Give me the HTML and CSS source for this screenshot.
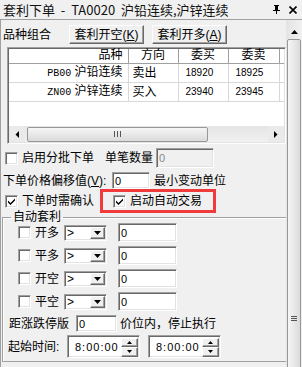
FILE: index.html
```html
<!DOCTYPE html>
<html lang="zh">
<head>
    <meta charset="UTF-8">
    <title>套利下单</title>
    <link rel="stylesheet" href="styles.css">
</head>
<body>
<div class="window">
    <div class="titlebar">
        <span class="title">套利下单  -  TA0020  沪铅连续,沪锌连续</span>
        <span class="pin">
            <svg width="7" height="9" viewBox="0 0 7 9"><path d="M1 0h5v1h-1v4h2v1h-3v3h-1v-3h-3v-1h2v-4h-1z" fill="#000"/></svg>
        </span>
        <span class="close">
            <svg width="8" height="8" viewBox="0 0 8 8"><path d="M0.5 0.5l7 7M7.5 0.5l-7 7" stroke="#000" stroke-width="1.6"/></svg>
        </span>
    </div>
    <div class="client">
        <div class="content">
            <div class="row-combo">
                <span class="combo-label">品种组合</span>
                <button class="btn">套利开空(<u>K</u>)</button>
                <button class="btn">套利开多(<u>A</u>)</button>
            </div>

            <div class="listview">
                <table class="grid">
                    <thead>
                        <tr>
                            <th class="c-name">品种</th>
                            <th class="c-dir">方向</th>
                            <th class="c-num">委买</th>
                            <th class="c-num2">委卖</th>
                            <th class="c-fill"></th>
                        </tr>
                    </thead>
                    <tbody>
                        <tr>
                            <td class="c-name"><span class="code">PB00</span> 沪铅连续</td>
                            <td class="c-dir">卖出</td>
                            <td class="num">18920</td>
                            <td class="num">18925</td>
                            <td class="c-fill"></td>
                        </tr>
                        <tr>
                            <td class="c-name"><span class="code">ZN00</span> 沪锌连续</td>
                            <td class="c-dir">买入</td>
                            <td class="num">23940</td>
                            <td class="num">23945</td>
                            <td class="c-fill"></td>
                        </tr>
                    </tbody>
                </table>
                <div class="hscroll">
                    <span class="arrow-btn">
                        <svg width="4" height="7" viewBox="0 0 4 7"><path d="M4 0v7L0.5 3.5z" fill="#000"/></svg>
                    </span>
                    <span class="htrack">
                        <span class="hthumb">
                            <svg width="7" height="6" viewBox="0 0 7 6"><path d="M0 0h1v6h-1zM3 0h1v6h-1zM6 0h1v6h-1z" fill="#555"/></svg>
                        </span>
                    </span>
                    <span class="arrow-btn">
                        <svg width="4" height="7" viewBox="0 0 4 7"><path d="M0 0v7L3.5 3.5z" fill="#000"/></svg>
                    </span>
                </div>
            </div>

            <div class="row-batch">
                <span class="chk"></span>
                <span class="chk-label">启用分批下单</span>
                <span class="qty-label">单笔数量</span>
                <input class="field qty" type="text" value="0" disabled>
            </div>

            <div class="row-offset">
                <span class="offset-label">下单价格偏移值(<u>V</u>):</span>
                <input class="field offset" type="text" value="0">
                <span class="unit-label">最小变动单位</span>
            </div>

            <div class="row-confirm">
                <span class="chk checked"><svg width="7" height="7" viewBox="0 0 7 7"><path d="M0 2.5l2.5 2.5 4.5-4.5v2l-4.5 4.5-2.5-2.5z" fill="#000"/></svg></span>
                <span class="chk-label confirm-label">下单时需确认</span>
                <span class="highlight">
                    <span class="chk checked"><svg width="7" height="7" viewBox="0 0 7 7"><path d="M0 2.5l2.5 2.5 4.5-4.5v2l-4.5 4.5-2.5-2.5z" fill="#000"/></svg></span>
                    <span class="chk-label">启动自动交易</span>
                </span>
            </div>

            <fieldset class="group">
                <legend>自动套利</legend>

                <div class="auto-row">
                    <span class="chk"></span>
                    <span class="auto-label">开多</span>
                    <span class="combo"><span class="combo-text">&gt;</span><span class="combo-btn"><svg width="7" height="4" viewBox="0 0 7 4"><path d="M0 0h7L3.5 4z" fill="#000"/></svg></span></span>
                    <input class="field auto-val" type="text" value="0">
                </div>
                <div class="auto-row">
                    <span class="chk"></span>
                    <span class="auto-label">平多</span>
                    <span class="combo"><span class="combo-text">&gt;</span><span class="combo-btn"><svg width="7" height="4" viewBox="0 0 7 4"><path d="M0 0h7L3.5 4z" fill="#000"/></svg></span></span>
                    <input class="field auto-val" type="text" value="0">
                </div>
                <div class="auto-row">
                    <span class="chk"></span>
                    <span class="auto-label">开空</span>
                    <span class="combo"><span class="combo-text">&gt;</span><span class="combo-btn"><svg width="7" height="4" viewBox="0 0 7 4"><path d="M0 0h7L3.5 4z" fill="#000"/></svg></span></span>
                    <input class="field auto-val" type="text" value="0">
                </div>
                <div class="auto-row">
                    <span class="chk"></span>
                    <span class="auto-label">平空</span>
                    <span class="combo"><span class="combo-text">&gt;</span><span class="combo-btn"><svg width="7" height="4" viewBox="0 0 7 4"><path d="M0 0h7L3.5 4z" fill="#000"/></svg></span></span>
                    <input class="field auto-val" type="text" value="0">
                </div>

                <div class="limit-row">
                    <span class="limit-label">距涨跌停版</span>
                    <input class="field limit" type="text" value="0">
                    <span class="limit-tail">价位内，停止执行</span>
                </div>

                <div class="time-row">
                    <span class="time-label">起始时间:</span>
                    <span class="spin">
                        <span class="spin-text">8:00:00</span>
                        <span class="spin-btns">
                            <span class="spin-btn"><svg width="5" height="3" viewBox="0 0 5 3"><path d="M0 3h5L2.5 0z" fill="#000"/></svg></span>
                            <span class="spin-btn"><svg width="5" height="3" viewBox="0 0 5 3"><path d="M0 0h5L2.5 3z" fill="#000"/></svg></span>
                        </span>
                    </span>
                    <span class="spin">
                        <span class="spin-text">8:00:00</span>
                        <span class="spin-btns">
                            <span class="spin-btn"><svg width="5" height="3" viewBox="0 0 5 3"><path d="M0 3h5L2.5 0z" fill="#000"/></svg></span>
                            <span class="spin-btn"><svg width="5" height="3" viewBox="0 0 5 3"><path d="M0 0h5L2.5 3z" fill="#000"/></svg></span>
                        </span>
                    </span>
                </div>
            </fieldset>
        </div>

        <div class="vscroll">
            <span class="up-btn">
                <svg width="7" height="4" viewBox="0 0 7 4"><path d="M0 4h7L3.5 0z" fill="#000"/></svg>
            </span>
            <span class="vthumb">
                <svg width="6" height="5" viewBox="0 0 6 5"><path d="M0 0h6v1h-6zM0 2h6v1h-6zM0 4h6v1h-6z" fill="#555"/></svg>
            </span>
        </div>
    </div>
</div>
</body>
</html>
```

FILE: styles.css
```css
* {
    box-sizing: border-box;
}
body {
    margin: 0;
    font-family: "Liberation Sans", "Noto Sans CJK SC", sans-serif;
    font-size: 12px;
    color: #000;
    background: #f0f0f0;
}
.window {
    width: 302px;
    height: 367px;
    overflow: hidden;
    display: flex;
    flex-direction: column;
}

/* title bar */
.titlebar {
    height: 20px;
    flex: none;
    display: flex;
    align-items: center;
    padding-left: 3px;
    border-bottom: 1px solid #a0a0a0;
    background: #f0f0f0;
}
.title {
    font-family: "Noto Sans CJK SC", sans-serif;
    font-size: 13px;
    line-height: 16px;
    white-space: pre;
    color: #111;
}
.pin {
    margin-left: auto;
    display: flex;
}
.close {
    display: flex;
    margin-left: 9px;
    margin-right: 5px;
}

.client {
    flex: 1;
    display: flex;
    min-height: 0;
}
.content {
    width: 286px;
    flex: none;
    border-left: 1px solid #a0a0a0;
    overflow: hidden;
    display: flex;
    flex-direction: column;
}

/* common controls */
.btn {
    font-family: inherit;
    font-size: 12px;
    line-height: 14px;
    height: 19px;
    width: 75px;
    padding: 0;
    margin: 0 8px 0 0;
    background: #f0f0f0;
    border: 1px solid;
    border-color: #fff #696969 #696969 #fff;
    box-shadow: inset -1px -1px #a0a0a0;
    color: #000;
}
.field {
    font-family: "Liberation Sans", sans-serif;
    font-size: 11px;
    padding: 0 0 0 2px;
    margin: 0;
    background: #fff;
    color: #000;
    border: 1px solid;
    border-color: #a0a0a0 #fff #fff #a0a0a0;
    box-shadow: inset 1px 1px #696969, inset -1px -1px #e3e3e3;
    outline: none;
}
.field:disabled {
    background: #f0f0f0;
    color: #8a8a8a;
}
.chk {
    width: 13px;
    height: 13px;
    flex: none;
    display: flex;
    align-items: center;
    justify-content: center;
    background: #fff;
    border: 1px solid;
    border-color: #a0a0a0 #fff #fff #a0a0a0;
    box-shadow: inset 1px 1px #696969, inset -1px -1px #e3e3e3;
}
.chk-label {
    margin-left: 4px;
    line-height: 14px;
}

/* first row */
.row-combo {
    margin-top: 5px;
    height: 19px;
    flex: none;
    display: flex;
    align-items: center;
    padding-left: 2px;
}
.combo-label {
    width: 66px;
    line-height: 14px;
}

/* list */
.listview {
    margin: 3px 0 0 6px;
    width: 279px;
    height: 97px;
    flex: none;
    background: #fff;
    border: 1px solid;
    border-color: #a0a0a0 #fff #fff #a0a0a0;
    box-shadow: inset 1px 1px #696969, inset -1px -1px #e3e3e3;
    padding: 1px;
    display: flex;
    flex-direction: column;
}
.grid {
    border-collapse: collapse;
    table-layout: fixed;
    width: 275px;
}
.grid th {
    height: 14px;
    padding: 0;
    font-weight: normal;
    line-height: 13px;
    background: #fff;
    border-right: 1px solid #a0a0a0;
    border-bottom: 1px solid #a0a0a0;
    text-align: center;
}
.grid td {
    height: 19px;
    padding: 0;
    line-height: 14px;
    border-right: 1px solid #d8d8d8;
    border-bottom: 1px solid #d8d8d8;
}
.grid .c-name {
    width: 119px;
    text-align: right;
    padding-right: 5px;
}
.grid .c-dir {
    width: 50px;
}
.grid td.c-dir {
    padding-left: 4px;
}
.grid .c-num {
    width: 50px;
}
.grid .c-num2 {
    width: 51px;
}
.grid .c-fill {
    border-right: none;
}
.code {
    font-family: "Liberation Mono", monospace;
    font-size: 10px;
}
.grid td.num {
    font-size: 10px;
    padding-left: 7px;
}
.hscroll {
    margin-top: auto;
    height: 16px;
    display: flex;
}
.arrow-btn {
    width: 16px;
    flex: none;
    display: flex;
    align-items: center;
    justify-content: center;
    background: #eaeaea;
}
.htrack {
    flex: 1;
    display: flex;
    align-items: center;
    background: linear-gradient(#e4e4e4, #f1f1f1);
}
.hthumb {
    width: 181px;
    height: 15px;
    margin-left: 2px;
    display: flex;
    align-items: center;
    justify-content: center;
    border: 1px solid #979797;
    border-radius: 2px;
    background: linear-gradient(#f6f6f6, #dadada);
}

/* option rows */
.row-batch {
    margin-top: 4px;
    height: 20px;
    flex: none;
    display: flex;
    align-items: center;
    padding-left: 4px;
}
.qty-label {
    margin-left: 11px;
    line-height: 14px;
}
.field.qty {
    margin-left: 3px;
    width: 58px;
    height: 20px;
}
.row-offset {
    margin-top: 4px;
    height: 17px;
    flex: none;
    display: flex;
    align-items: center;
    padding-left: 2px;
}
.offset-label {
    width: 109px;
    line-height: 14px;
}
.field.offset {
    width: 38px;
    height: 17px;
}
.unit-label {
    margin-left: 4px;
    line-height: 14px;
}
.row-confirm {
    height: 24px;
    flex: none;
    display: flex;
    align-items: center;
    padding-left: 4px;
}
.confirm-label {
    width: 78px;
}
.highlight {
    width: 116px;
    height: 24px;
    display: flex;
    align-items: center;
    padding-left: 10px;
    border: 3px solid #ef3b3b;
}

/* group box */
.group {
    margin: -2px 0 0 1px;
    width: 290px;
    padding: 0 0 3px 0;
    border: 1px solid #a0a0a0;
    box-shadow: inset 1px 1px #fff;
    min-width: 0;
}
.group legend {
    margin-left: 8px;
    padding: 0 2px;
    line-height: 12px;
}
.auto-row {
    height: 19px;
    display: flex;
    align-items: center;
    padding-left: 15px;
    margin-top: 4px;
}
.auto-row:first-of-type {
    margin-top: 0;
}
.auto-label {
    width: 29px;
    margin-left: 4px;
    line-height: 14px;
}
.combo {
    width: 43px;
    height: 16px;
    display: flex;
    align-items: center;
    background: #fff;
    border: 1px solid;
    border-color: #a0a0a0 #fff #fff #a0a0a0;
    box-shadow: inset 1px 1px #696969, inset -1px -1px #e3e3e3;
    padding: 1px 1px 1px 2px;
}
.combo-text {
    font-family: "Liberation Sans", sans-serif;
    font-size: 12px;
    line-height: 12px;
}
.combo-btn {
    margin-left: auto;
    width: 15px;
    height: 12px;
    display: flex;
    align-items: center;
    justify-content: center;
    background: #f0f0f0;
    border: 1px solid;
    border-color: #fff #696969 #696969 #fff;
    box-shadow: inset -1px -1px #a0a0a0;
}
.field.auto-val {
    margin-left: 11px;
    width: 59px;
    height: 19px;
}
.limit-row {
    margin-top: 4px;
    height: 17px;
    display: flex;
    align-items: center;
    padding-left: 6px;
}
.limit-label {
    width: 67px;
    line-height: 14px;
}
.field.limit {
    width: 41px;
    height: 17px;
}
.limit-tail {
    margin-left: 3px;
    line-height: 14px;
}
.time-row {
    margin-top: 3px;
    height: 23px;
    display: flex;
    align-items: center;
    padding-left: 5px;
}
.time-label {
    width: 59px;
    line-height: 14px;
}
.spin {
    width: 73px;
    height: 23px;
    margin-right: 8px;
    display: flex;
    align-items: center;
    background: #fff;
    border: 1px solid;
    border-color: #a0a0a0 #fff #fff #a0a0a0;
    box-shadow: inset 1px 1px #696969, inset -1px -1px #e3e3e3;
    padding: 2px 1px 1px 7px;
}
.spin-text {
    font-size: 11px;
    letter-spacing: 1px;
    line-height: 13px;
}
.spin-btns {
    margin-left: auto;
    width: 17px;
    height: 19px;
    display: flex;
    flex-direction: column;
}
.spin-btn {
    flex: 1;
    display: flex;
    align-items: center;
    justify-content: center;
    background: #f0f0f0;
    border: 1px solid;
    border-color: #fff #696969 #696969 #fff;
    box-shadow: inset -1px -1px #a0a0a0;
}

/* window scrollbar */
.vscroll {
    width: 16px;
    flex: none;
    display: flex;
    flex-direction: column;
    align-items: center;
    background: linear-gradient(to right, #e4e4e4, #f1f1f1);
}
.up-btn {
    height: 18px;
    width: 16px;
    flex: none;
    display: flex;
    align-items: flex-end;
    justify-content: center;
    padding-bottom: 4px;
}
.vthumb {
    margin-top: 1px;
    width: 14px;
    flex: none;
    height: 560px;
    display: flex;
    justify-content: center;
    padding-top: 276px;
    border: 1px solid #979797;
    border-radius: 2px;
    background: linear-gradient(to right, #f6f6f6, #dadada);
}
```
